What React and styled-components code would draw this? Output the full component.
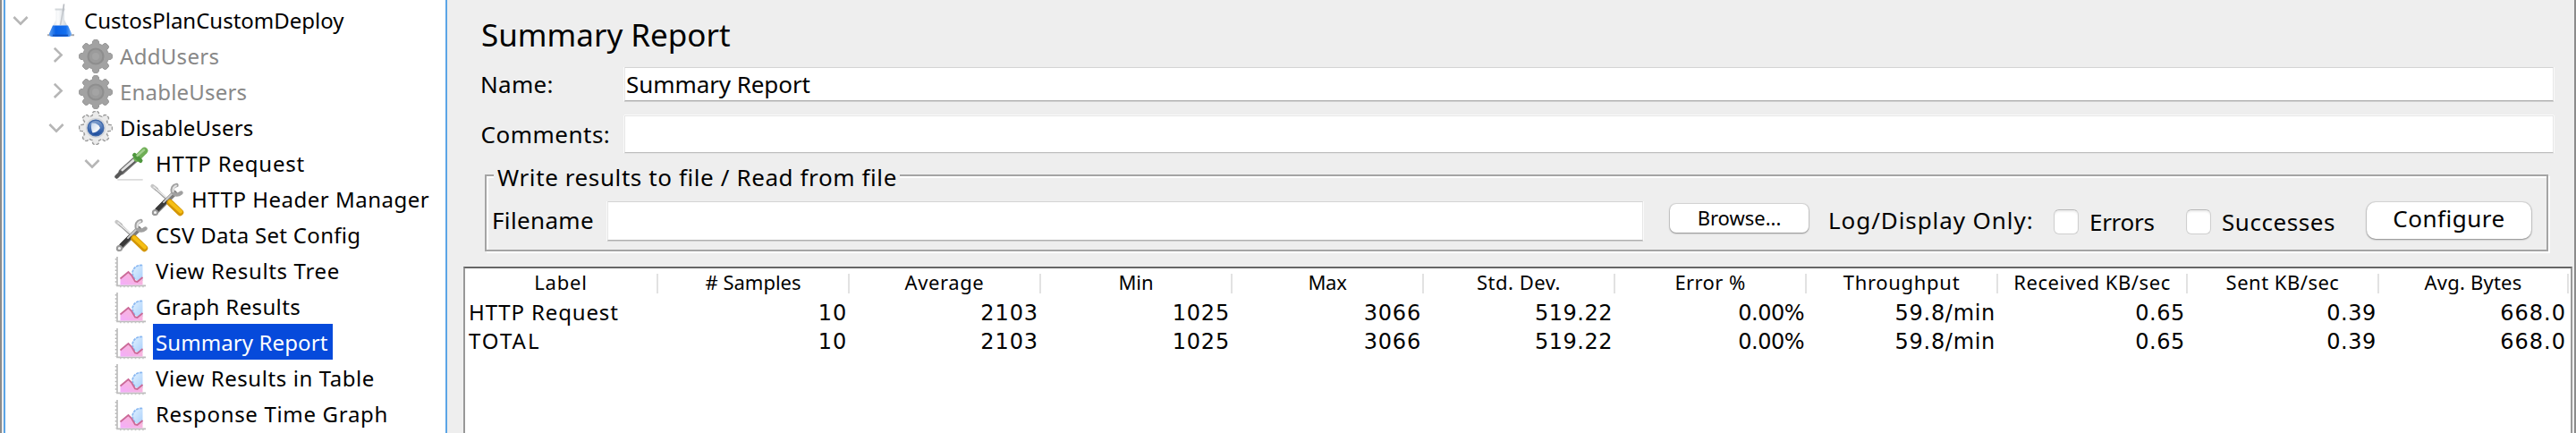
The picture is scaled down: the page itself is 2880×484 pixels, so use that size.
import React from 'react';
import styled, { createGlobalStyle } from 'styled-components';

const GlobalStyle = createGlobalStyle`
  * { box-sizing: border-box; }
  body { margin: 0; background: #eee; overflow: hidden; }
`;

const Window = styled.div`
  display: flex;
  width: 2880px;
  height: 484px;
  overflow: hidden;
  background: #eee;
  border-left: 2px solid #8b8b8b;
  border-right: 2px solid #8b8b8b;
  font-family: 'Noto Sans', 'Open Sans', sans-serif;
  font-size: 26px;
  color: #000;
  white-space: pre;
`;

const TreePanel = styled.div`
  width: 496px;
  flex: none;
  margin-left: 2px;
  padding-top: 2px;
  background: #fff;
  border-left: 2px solid #5ba5e6;
  border-right: 2px solid #5ba5e6;
`;

const TreeRow = styled.div`
  display: flex;
  height: 40px;
  padding-left: ${(p) => p.$level * 40}px;
`;

const ToggleSlot = styled.div`
  width: 34px;
  height: 40px;
  margin-right: 8px;
  display: flex;
  align-items: center;
  justify-content: center;
`;

const IconSlot = styled.div`
  width: 38px;
  height: 38px;
  margin: 2px 5px 0 0;
  svg { display: block; }
`;

const TreeLabel = styled.div`
  height: 40px;
  padding: 0 6px 0 3px;
  font-size: 24px;
  line-height: 41px;
  letter-spacing: ${(p) => p.$track}px;
  color: ${(p) => (p.$selected ? '#fff' : p.$disabled ? '#888' : '#000')};
  background: ${(p) => (p.$selected ? '#064adb' : 'transparent')};
`;

const Main = styled.div`
  flex: 1;
  display: flex;
  flex-direction: column;
  padding: 14px 2px 0 18px;
`;

const Title = styled.h1`
  margin: 0 0 12px 20px;
  height: 49px;
  line-height: 49px;
  font-size: 35px;
  font-weight: 400;
`;

const FormRow = styled.div`
  display: flex;
  height: ${(p) => p.$height}px;
  line-height: ${(p) => p.$height}px;
  margin: 0 21px ${(p) => p.$after}px 18px;
`;

const FormLabel = styled.label`
  width: 162px;
  padding-left: ${(p) => p.$inset}px;
  letter-spacing: ${(p) => p.$track}px;
`;

const Field = styled.div`
  flex: ${(p) => (p.$width ? 'none' : 1)};
  width: ${(p) => (p.$width ? p.$width + 'px' : 'auto')};
  height: 100%;
  padding-left: 1px;
  line-height: ${(p) => p.$line || 36}px;
  letter-spacing: -0.08px;
  background: #fff;
  border: 1px solid #e6e6e6;
  border-top-color: ${(p) => (p.$soft ? '#e6e6e6' : '#d4d4d4')};
  border-bottom-color: ${(p) => (p.$soft ? '#bdbdbd' : '#b0b0b0')};
  box-shadow: -1px 0 #fafafa, 1px 0 #fafafa, 0 1px ${(p) => (p.$soft ? '#e4e4e4' : '#d0d0d0')}
    ${(p) => (p.$soft ? ', 0 -1px #fafafa' : '')};
`;

const FileGroup = styled.section`
  width: 2307px;
  height: 86px;
  margin: 0 0 17px 24px;
  border: 2px solid #a4a4a4;
  box-shadow: 2px 2px 0 #fff, inset 2px 2px 0 #fff;
`;

const Legend = styled.div`
  width: 454px;
  height: 36px;
  margin: -17px 0 9px 8px;
  padding-left: 4px;
  line-height: 36px;
  letter-spacing: 0.6px;
  background: #eee;
`;

const FileRow = styled.div`
  display: flex;
  align-items: flex-start;
  height: 44px;
  padding-left: 6px;
`;

const FileLabel = styled.label`
  width: ${(p) => p.$width}px;
  margin: ${(p) => p.$top}px 0 0 ${(p) => p.$left || 0}px;
  line-height: 44px;
  letter-spacing: ${(p) => p.$track}px;
`;

const Button = styled.button`
  display: block;
  width: ${(p) => (p.$small ? 155 : 184)}px;
  height: ${(p) => (p.$small ? 32 : 41)}px;
  margin: ${(p) => (p.$small ? '3px 0 0 30px' : '1px 0 0')};
  padding: 0;
  border: 0;
  border-radius: ${(p) => (p.$small ? 7 : 10)}px;
  background: #fff;
  box-shadow: 0 0 1px 1px rgba(0, 0, 0, 0.11), 0 1px 2px rgba(0, 0, 0, 0.35);
  font-family: inherit;
  font-size: ${(p) => (p.$small ? 22 : 26)}px;
  line-height: ${(p) => (p.$small ? 30 : 36)}px;
  letter-spacing: ${(p) => (p.$small ? 0 : 0.53)}px;
  color: #000;
  span { display: block; height: 100%; }
`;

const CheckBox = styled.span`
  width: 28px;
  height: 28px;
  margin-top: 9px;
  border: 1px solid #cfcfcf;
  border-top-color: #b8b8b8;
  border-radius: 6px;
  background: #fff;
  box-shadow: inset 0 2px 2px rgba(0, 0, 0, 0.07);
`;

const Table = styled.div`
  flex: 1;
  background: #fff;
  border: 2px solid #989898;
  border-top-color: #666;
  border-bottom: 0;
`;

const TableLine = styled.div`
  display: grid;
  grid-template-columns: 216px repeat(7, 214px) 212px 214px 212px;
  height: 32px;
`;

const HeadCell = styled.div`
  height: 22px;
  margin-top: 6px;
  border-right: 2px solid #e2e2e2;
  text-align: center;
  font-size: 22px;
  line-height: 18px;
  letter-spacing: ${(p) => p.$track}px;
`;

const NameCell = styled.div`
  padding-left: 4px;
  font-size: 24px;
  line-height: 33px;
  letter-spacing: ${(p) => p.$track}px;
`;

const NumberCell = styled.div`
  padding-right: 3px;
  text-align: right;
  font-family: 'DejaVu Sans', sans-serif;
  font-size: 24px;
  line-height: 36px;
  letter-spacing: ${(p) => p.$track}px;
`;

const Chevron = ({ open }) => (
  <svg width="20" height="20" viewBox="0 0 20 20" fill="none" stroke="#b6b6b6" strokeWidth="2.6">
    <path d={open ? 'M2.4 7l7.6 7.6L17.6 7' : 'M7.8 1.8l7.8 7.6-7.8 7.6'} />
  </svg>
);

const Flask = () => (
  <svg width="38" height="38" viewBox="0 0 38 38">
    <defs>
      <linearGradient id="glass" x1="0" x2="1">
        <stop offset="0" stopColor="#c4cbd2" />
        <stop offset=".4" stopColor="#fbfcfd" />
        <stop offset="1" stopColor="#b9c2cb" />
      </linearGradient>
      <linearGradient id="liquid" x1="0" x2="1">
        <stop offset="0" stopColor="#5a9cf0" />
        <stop offset=".3" stopColor="#0a62e6" />
        <stop offset=".75" stopColor="#1470f0" />
        <stop offset="1" stopColor="#76aef2" />
      </linearGradient>
    </defs>
    <path d="M5 35.2h30" stroke="#a9a9ad" strokeWidth="2" />
    <path d="M14.5 6h9.5v12l7.500 15.500q.5 3-3 3.500h-18.500q-3.500-.5-3-3.500l7.500-15.500z" fill="url(#glass)" />
    <path d="M11 24.500h17l4 9q0 3-3 3.500h-19q-3.500-.5-3-3.500z" fill="url(#liquid)" />
    <path d="M13.500 6.500h11" stroke="#d3d7da" strokeWidth="2" />
    <path d="M23.500.5l-1 8" stroke="#b6bac0" strokeWidth="1.600" />
    <path d="M22.500 8l-3 16" stroke="#b6bac0" strokeWidth="1.600" opacity=".7" />
    <path d="M11 35.500h17" stroke="#1551b8" strokeWidth="1.600" />
  </svg>
);

const gearOutline = (() => {
  const points = [];
  for (let i = 0; i < 8; i += 1) {
    [[-15, 14.4], [-11, 17.4], [-6, 18.5], [6, 18.5], [11, 17.4], [15, 14.4]].forEach(([turn, r]) => {
      const a = ((i * 45 + turn) * Math.PI) / 180;
      points.push(`${(19 + r * Math.cos(a)).toFixed(2)} ${(19 + r * Math.sin(a)).toFixed(2)}`);
    });
  }
  return `M${points.join('L')}Z`;
})();

const Gear = ({ disabled }) =>
  disabled ? (
    <svg width="38" height="38" viewBox="0 0 38 38">
      <path d={gearOutline} fill="#a2a2a2" stroke="#989898" strokeWidth="1" />
      <circle cx="19" cy="19" r="8.500" fill="#9b9b9b" stroke="#8e8e8e" strokeWidth="2.200" />
      <circle cx="19" cy="19" r="4" fill="#a4a4a4" />
    </svg>
  ) : (
    <svg width="38" height="38" viewBox="0 0 38 38">
      <defs>
        <linearGradient id="orb" x1="0" y1="0" x2="0" y2="1">
          <stop offset="0" stopColor="#86a3cf" />
          <stop offset=".5" stopColor="#4c76b8" />
          <stop offset="1" stopColor="#17479a" />
        </linearGradient>
        <linearGradient id="orbLight" x1="0" y1="0" x2="1" y2="1">
          <stop offset="0" stopColor="#c9d9f0" />
          <stop offset=".6" stopColor="#fff" />
        </linearGradient>
      </defs>
      <path d={gearOutline} fill="#ebebeb" stroke="#9c9c9c" strokeWidth="1.400" strokeDasharray="4 1.500" />
      <circle cx="19" cy="19" r="11.200" fill="#d4d6da" />
      <circle cx="19" cy="19" r="8.800" fill="url(#orb)" stroke="#3d67a9" strokeWidth="1.400" />
      <path d="M14.500 13.500q7-.5 9.500 5.500-3 5-8.500 5.500-2.500-5.500-1-11z" fill="url(#orbLight)" opacity=".92" />
    </svg>
  );

const Dropper = () => (
  <svg width="38" height="38" viewBox="0 0 38 38" strokeLinecap="round">
    <path d="M4 36.800h27" stroke="#dcdcdc" strokeWidth="1.800" />
    <path d="M8 28L23 14.500" stroke="#747474" strokeWidth="6.600" />
    <path d="M9 26.500L22 15" stroke="#e2e2e2" strokeWidth="3.600" />
    <path d="M9 28.500L23 16.500" stroke="#555" strokeWidth="1.300" />
    <path d="M2.500 33.500L7 29" stroke="#585858" strokeWidth="4.500" />
    <path d="M25 13L33.500 4.500" stroke="#6fae56" strokeWidth="7.500" />
    <path d="M22.500 9.500L29 15.500" stroke="#4f973e" strokeWidth="5" />
    <path d="M25.500 10L33 3.500" stroke="#a2cf8f" strokeWidth="2.400" />
  </svg>
);

const Tools = () => (
  <svg width="38" height="38" viewBox="0 0 38 38" strokeLinecap="round" fill="none">
    <path d="M2.500 4L7 7.500" stroke="#c6c6c6" strokeWidth="4.200" />
    <path d="M6 7L20 20" stroke="#a5a5a5" strokeWidth="3" />
    <path d="M4 5L18 17" stroke="#efefef" strokeWidth="1.300" />
    <path d="M27 12L5 34" stroke="#7c7c7c" strokeWidth="6" />
    <path d="M17 21L8 30" stroke="#3a3a3a" strokeWidth="4.800" />
    <path d="M25 12L15 22" stroke="#cacaca" strokeWidth="2" />
    <path d="M29.500 3q-6 1-4.500 8 4 5 9.500.5" stroke="#a0a0a0" strokeWidth="4.400" />
    <path d="M29 3.500q-4 1.500-3.500 6.500" stroke="#e4e4e4" strokeWidth="2" />
    <circle cx="5.500" cy="33.500" r="2.600" fill="#f3f3f3" stroke="#9a9a9a" strokeWidth="2" />
    <path d="M22 22.500L33.500 33.500" stroke="#d39606" strokeWidth="7.400" />
    <path d="M22 21.500L34 32.500" stroke="#f6bf14" strokeWidth="4" />
  </svg>
);

const Chart = () => (
  <svg width="38" height="38" viewBox="0 0 38 38" fill="none">
    <defs>
      <linearGradient id="area" x1="0" y1="1" x2="1" y2="0">
        <stop offset="0" stopColor="#f3adfc" />
        <stop offset="1" stopColor="#fbb9cb" />
      </linearGradient>
      <linearGradient id="sky" x1="0" y1="0" x2="1" y2="1">
        <stop offset="0" stopColor="#e3f2ff" />
        <stop offset="1" stopColor="#a9d0fb" />
      </linearGradient>
    </defs>
    <path d="M3 3v32.300h32" stroke="#bdbdbd" strokeWidth="1.700" />
    <path d="M1.500 5v30" stroke="#b2b2b2" strokeWidth="1.500" strokeDasharray="1.500 2.700" />
    <path d="M6 36.500h29" stroke="#c6c6c6" strokeWidth="1.300" strokeDasharray="1.500 2.700" />
    <path d="M31.500 12q-9-.5-11.500 8 .5 8 6 10h5.500z" fill="url(#sky)" />
    <path d="M31 12.500q-9-.5-11 8 .5 5 3 7.500" stroke="#8ab8f1" strokeWidth="1.700" strokeDasharray="3 1" />
    <path d="M6.500 27.500l9.500-7.500 3.500 4.500 4.500 6 7.500-4v8h-25z" fill="url(#area)" />
    <path d="M6.500 27.500l9-7.500 3.500 3.500 4 7 2.500.5 6-5" stroke="#cb6a98" strokeWidth="1.800" />
  </svg>
);

const icons = {
  flask: <Flask />,
  gear: <Gear />,
  gearOff: <Gear disabled />,
  dropper: <Dropper />,
  tools: <Tools />,
  chart: <Chart />,
};

const nodes = [
  { text: 'CustosPlanCustomDeploy', level: 0, icon: 'flask', open: true, track: 0 },
  { text: 'AddUsers', level: 1, icon: 'gearOff', open: false, track: 0.3, disabled: true },
  { text: 'EnableUsers', level: 1, icon: 'gearOff', open: false, track: 0.2, disabled: true },
  { text: 'DisableUsers', level: 1, icon: 'gear', open: true, track: 0.2 },
  { text: 'HTTP Request', level: 2, icon: 'dropper', open: true, track: 0.8 },
  { text: 'HTTP Header Manager', level: 3, icon: 'tools', track: 0.5 },
  { text: 'CSV Data Set Config', level: 2, icon: 'tools', track: 0.3 },
  { text: 'View Results Tree', level: 2, icon: 'chart', track: 0.65 },
  { text: 'Graph Results', level: 2, icon: 'chart', track: 0.36 },
  { text: 'Summary Report', level: 2, icon: 'chart', track: 0.1, selected: true },
  { text: 'View Results in Table', level: 2, icon: 'chart', track: 0.58 },
  { text: 'Response Time Graph', level: 2, icon: 'chart', track: 0.68 },
];

const columns = [
  ['Label', 0.8],
  ['# Samples', 0],
  ['Average', 0.6],
  ['Min', 0],
  ['Max', -0.3],
  ['Std. Dev.', 0.5],
  ['Error %', 0.4],
  ['Throughput', 0.7],
  ['Received KB/sec', 0.56],
  ['Sent KB/sec', 0.5],
  ['Avg. Bytes', 0.2],
];

const values = [
  ['10', 0.8],
  ['2103', 0.9],
  ['1025', 0.8],
  ['3066', 0.8],
  ['519.22', 0.5],
  ['0.00%', -0.5],
  ['59.8/min', 0.7],
  ['0.65', 0.6],
  ['0.39', 0.6],
  ['668.0', 1],
];

const samples = [
  { name: 'HTTP Request', track: 0.85 },
  { name: 'TOTAL', track: 2 },
];

export default function App() {
  return (
    <>
      <GlobalStyle />
      <Window>
        <TreePanel>
          {nodes.map((n) => (
            <TreeRow key={n.text} $level={n.level}>
              <ToggleSlot>{n.open !== undefined && <Chevron open={n.open} />}</ToggleSlot>
              <IconSlot>{icons[n.icon]}</IconSlot>
              <TreeLabel $track={n.track} $selected={n.selected} $disabled={n.disabled}>
                {n.text}
              </TreeLabel>
            </TreeRow>
          ))}
        </TreePanel>
        <Main>
          <Title>Summary Report</Title>
          <FormRow $height={38} $after={16}>
            <FormLabel $inset={1} $track={0.3}>Name:</FormLabel>
            <Field>Summary Report</Field>
          </FormRow>
          <FormRow $height={42} $after={24}>
            <FormLabel $inset={1.5} $track={0.5}>Comments:</FormLabel>
            <Field $soft />
          </FormRow>
          <FileGroup>
            <Legend>Write results to file / Read from file</Legend>
            <FileRow>
              <FileLabel $width={129} $top={-1} $track={0.35}>Filename</FileLabel>
              <Field $width={1158} />
              <Button $small><span>Browse...</span></Button>
              <FileLabel $width={252} $top={-1} $left={22} $track={0.93}>Log/Display Only:</FileLabel>
              <CheckBox />
              <FileLabel $width={108} $top={1} $left={12} $track={-0.3}>Errors</FileLabel>
              <CheckBox />
              <FileLabel $width={162} $top={1} $left={12} $track={0.55}>Successes</FileLabel>
              <Button><span>Configure</span></Button>
            </FileRow>
          </FileGroup>
          <Table>
            <TableLine>
              {columns.map(([text, track]) => (
                <HeadCell key={text} $track={track}>{text}</HeadCell>
              ))}
            </TableLine>
            {samples.map((s) => (
              <TableLine key={s.name}>
                <NameCell $track={s.track}>{s.name}</NameCell>
                {values.map(([text, track], i) => (
                  <NumberCell key={i} $track={track}>{text}</NumberCell>
                ))}
              </TableLine>
            ))}
          </Table>
        </Main>
      </Window>
    </>
  );
}
